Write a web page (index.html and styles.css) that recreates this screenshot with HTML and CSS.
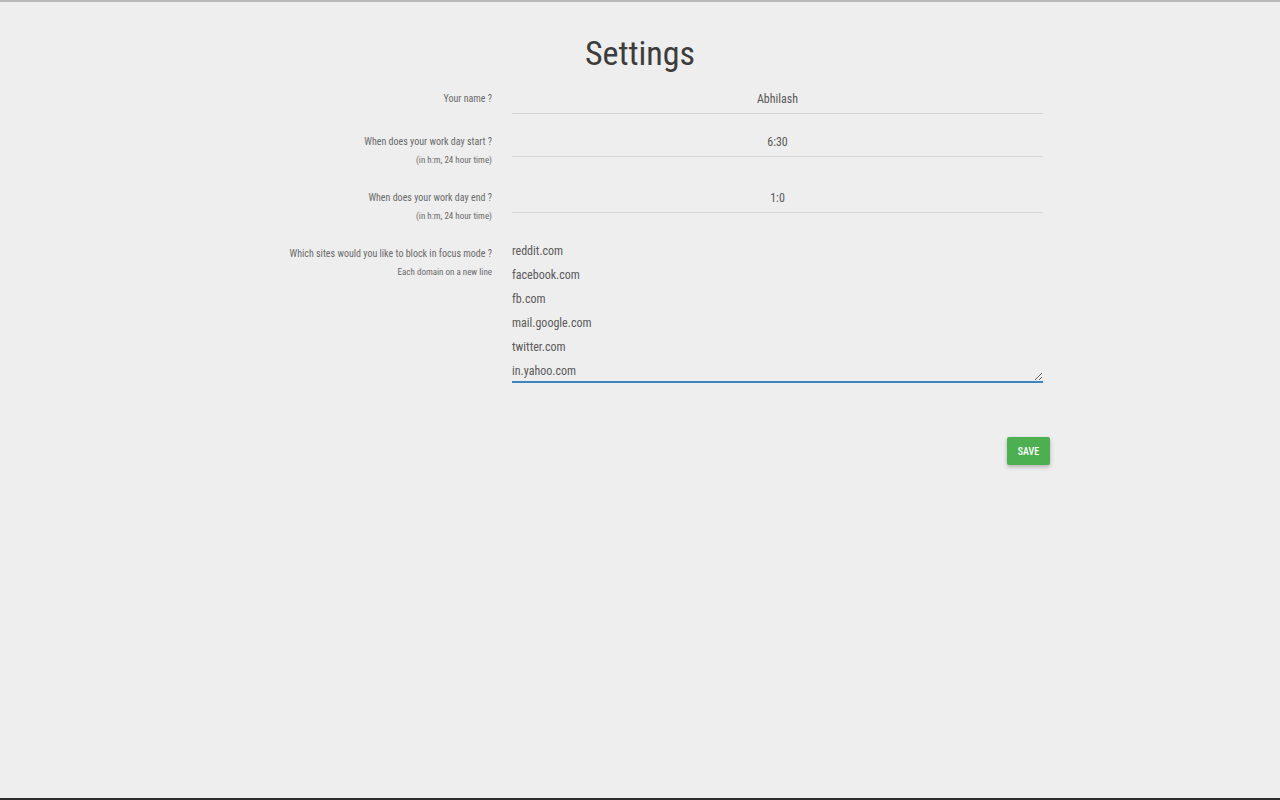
FILE: index.html
```html
<!DOCTYPE html>
<html lang="en">
<head>
<meta charset="utf-8">
<title>Settings</title>
<link rel="stylesheet" href="styles.css">
</head>
<body>
<div class="page">
  <h1 class="title">Settings</h1>
  <form class="form">
    <div class="row">
      <div class="label"><div>Your name ?</div></div>
      <input class="field" type="text" value="Abhilash">
    </div>
    <div class="row">
      <div class="label"><div>When does your work day start ?</div><div class="sub">(in h:m, 24 hour time)</div></div>
      <input class="field" type="text" value="6:30">
    </div>
    <div class="row">
      <div class="label"><div>When does your work day end ?</div><div class="sub">(in h:m, 24 hour time)</div></div>
      <input class="field" type="text" value="1:0">
    </div>
    <div class="row">
      <div class="label"><div>Which sites would you like to block in focus mode ?</div><div class="sub">Each domain on a new line</div></div>
      <textarea class="area">reddit.com
facebook.com
fb.com
mail.google.com
twitter.com
in.yahoo.com</textarea>
    </div>
    <div class="actions">
      <button class="save" type="button">SAVE</button>
    </div>
  </form>
</div>
</body>
</html>
```
FILE: styles.css
```css
html, body {
  margin: 0;
  padding: 0;
}
body {
  background: #eeeeee;
  font-family: Roboto, "Noto Sans", sans-serif;
  font-stretch: condensed;
}
.page {
  box-sizing: border-box;
  height: 800px;
  border-top: 2px solid #b8b8b8;
  border-bottom: 2px solid #2b2b2b;
}
.title {
  margin: 0;
  padding-top: 31px;
  font-size: 34px;
  line-height: 40px;
  font-weight: 400;
  color: #3c3c3c;
  text-align: center;
}
.form {
  margin-top: 11px;
}
.row {
  display: grid;
  grid-template-columns: 492px 531px;
  column-gap: 20px;
  margin-bottom: 13px;
  align-items: start;
}
.label {
  text-align: right;
  font-size: 10px;
  line-height: 19px;
  color: #6a6a6a;
  padding-top: 5px;
}
.sub {
  font-size: 9px;
}
.field {
  box-sizing: border-box;
  width: 531px;
  height: 30px;
  margin: 0;
  padding: 0;
  border: none;
  border-bottom: 1px solid #d6d6d6;
  background: transparent;
  font-family: inherit;
  font-stretch: condensed;
  font-size: 12px;
  color: #5a5a5a;
  text-align: center;
  outline: none;
}
.area {
  box-sizing: border-box;
  display: block;
  width: 531px;
  height: 144px;
  margin: 0;
  padding: 0;
  border: none;
  border-bottom: 2px solid #3b86c2;
  background: transparent;
  font-family: inherit;
  font-stretch: condensed;
  font-size: 12px;
  line-height: 24px;
  color: #5a5a5a;
  overflow: hidden;
  outline: none;
}
.actions {
  width: 1050px;
  display: flex;
  justify-content: flex-end;
  margin-top: 54px;
}
.save {
  width: 43px;
  height: 28px;
  padding: 0;
  border: none;
  border-radius: 2px;
  background: #4caf50;
  color: #ffffff;
  font-family: inherit;
  font-stretch: condensed;
  font-size: 10px;
  font-weight: 500;
  box-shadow: 0 2px 4px rgba(0,0,0,0.25);
}
```
